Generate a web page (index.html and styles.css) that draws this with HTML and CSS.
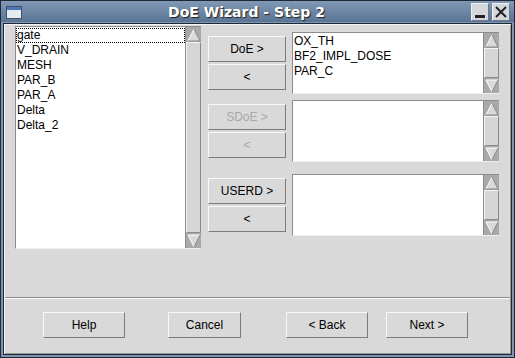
FILE: index.html
```html
<!DOCTYPE html>
<html lang="en">
<head>
    <meta charset="UTF-8">
    <title>DoE Wizard - Step 2</title>
    <link rel="stylesheet" href="styles.css">
</head>
<body>
    <div class="window">
        <!-- Title bar -->
        <div class="titlebar">
            <div class="win-icon"><div class="win-icon-bar"></div></div>
            <div class="title">DoE Wizard - Step 2</div>
            <div class="win-buttons">
                <div class="win-btn">
                    <svg width="16" height="16" viewBox="0 0 16 16"><rect x="3" y="11" width="10" height="3" fill="#222"/></svg>
                </div>
                <div class="win-btn">
                    <svg width="16" height="16" viewBox="0 0 16 16"><path d="M3 3 L13 13 M13 3 L3 13" stroke="#222" stroke-width="2"/></svg>
                </div>
            </div>
        </div>

        <div class="client">
            <div class="main">
                <!-- Parameter list -->
                <div class="listbox tall">
                    <div class="list-items">
                        <div class="item focused">gate</div>
                        <div class="item">V_DRAIN</div>
                        <div class="item">MESH</div>
                        <div class="item">PAR_B</div>
                        <div class="item">PAR_A</div>
                        <div class="item">Delta</div>
                        <div class="item">Delta_2</div>
                    </div>
                    <div class="scrollbar">
                        <div class="arrow"><svg width="14" height="14" viewBox="0 0 14 14"><polygon points="7,1 13,13 1,13" fill="#d9d9d9"/><path d="M7 1 L1 13" stroke="#fff"/><path d="M7 1 L13 13 L1 13" stroke="#8a8a8a" fill="none"/></svg></div>
                        <div class="thumb"></div>
                        <div class="arrow"><svg width="14" height="14" viewBox="0 0 14 14"><polygon points="1,1 13,1 7,13" fill="#d9d9d9"/><path d="M1 1 L13 1 M1 1 L7 13" stroke="#fff"/><path d="M13 1 L7 13" stroke="#8a8a8a"/></svg></div>
                    </div>
                </div>

                <div class="groups">
                    <div class="group g1">
                        <div class="btn-col">
                            <button class="btn">DoE &gt;</button>
                            <button class="btn">&lt;</button>
                        </div>
                        <div class="listbox short">
                            <div class="list-items">
                                <div class="item">OX_TH</div>
                                <div class="item">BF2_IMPL_DOSE</div>
                                <div class="item">PAR_C</div>
                            </div>
                            <div class="scrollbar">
                                <div class="arrow"><svg width="14" height="14" viewBox="0 0 14 14"><polygon points="7,1 13,13 1,13" fill="#d9d9d9"/><path d="M7 1 L1 13" stroke="#fff"/><path d="M7 1 L13 13 L1 13" stroke="#8a8a8a" fill="none"/></svg></div>
                                <div class="thumb"></div>
                                <div class="arrow"><svg width="14" height="14" viewBox="0 0 14 14"><polygon points="1,1 13,1 7,13" fill="#d9d9d9"/><path d="M1 1 L13 1 M1 1 L7 13" stroke="#fff"/><path d="M13 1 L7 13" stroke="#8a8a8a"/></svg></div>
                            </div>
                        </div>
                    </div>

                    <div class="group g2">
                        <div class="btn-col">
                            <button class="btn disabled">SDoE &gt;</button>
                            <button class="btn disabled">&lt;</button>
                        </div>
                        <div class="listbox short">
                            <div class="list-items"></div>
                            <div class="scrollbar">
                                <div class="arrow"><svg width="14" height="14" viewBox="0 0 14 14"><polygon points="7,1 13,13 1,13" fill="#d9d9d9"/><path d="M7 1 L1 13" stroke="#fff"/><path d="M7 1 L13 13 L1 13" stroke="#8a8a8a" fill="none"/></svg></div>
                                <div class="thumb"></div>
                                <div class="arrow"><svg width="14" height="14" viewBox="0 0 14 14"><polygon points="1,1 13,1 7,13" fill="#d9d9d9"/><path d="M1 1 L13 1 M1 1 L7 13" stroke="#fff"/><path d="M13 1 L7 13" stroke="#8a8a8a"/></svg></div>
                            </div>
                        </div>
                    </div>

                    <div class="group g3">
                        <div class="btn-col">
                            <button class="btn">USERD &gt;</button>
                            <button class="btn">&lt;</button>
                        </div>
                        <div class="listbox short">
                            <div class="list-items"></div>
                            <div class="scrollbar">
                                <div class="arrow"><svg width="14" height="14" viewBox="0 0 14 14"><polygon points="7,1 13,13 1,13" fill="#d9d9d9"/><path d="M7 1 L1 13" stroke="#fff"/><path d="M7 1 L13 13 L1 13" stroke="#8a8a8a" fill="none"/></svg></div>
                                <div class="thumb"></div>
                                <div class="arrow"><svg width="14" height="14" viewBox="0 0 14 14"><polygon points="1,1 13,1 7,13" fill="#d9d9d9"/><path d="M1 1 L13 1 M1 1 L7 13" stroke="#fff"/><path d="M13 1 L7 13" stroke="#8a8a8a"/></svg></div>
                            </div>
                        </div>
                    </div>
                </div>
            </div>

            <div class="separator"></div>

            <!-- Wizard buttons -->
            <div class="footer">
                <button class="btn wide help">Help</button>
                <button class="btn cancel">Cancel</button>
                <button class="btn wide back">&lt; Back</button>
                <button class="btn wide next">Next &gt;</button>
            </div>
        </div>
    </div>
</body>
</html>
```

FILE: styles.css
```css
body {
    margin: 0;
    font-family: "Liberation Sans", Arial, sans-serif;
    font-size: 12px;
}
.window {
    width: 515px;
    height: 358px;
    box-sizing: border-box;
    background: #7f95b0;
    border: 1px solid #1e2938;
    display: flex;
    flex-direction: column;
}

/* Title bar */
.titlebar {
    height: 21px;
    flex-shrink: 0;
    display: flex;
    align-items: center;
    background: linear-gradient(#8199b6, #5a7494);
}
.win-icon {
    width: 14px;
    height: 11px;
    margin-left: 5px;
    margin-top: 1px;
    background: #e6ebf0;
    border: 1px solid #3c516c;
}
.win-icon-bar {
    height: 3px;
    background: #4d78b8;
}
.title {
    flex: 1;
    text-align: center;
    color: #fff;
    font-family: "DejaVu Sans", sans-serif;
    font-weight: bold;
    font-size: 14px;
    text-shadow: 1px 1px 1px #222;
}
.win-buttons {
    display: flex;
    gap: 3px;
    margin-right: 4px;
    margin-top: 1px;
}
.win-btn {
    width: 16px;
    height: 16px;
    background: #d4d8dc;
    border: 1px solid #f0f0f0;
    border-right-color: #6a7a8c;
    border-bottom-color: #6a7a8c;
}

/* Client area */
.client {
    flex: 1;
    min-height: 0;
    margin: 1px 2px 2px;
    border: 1px solid #1e2938;
    background: #d9d9d9;
    display: flex;
    flex-direction: column;
    box-shadow: inset 1px 1px 0 #f4f4f4, inset -1px -1px 0 #9a9a9a;
}
.main {
    display: flex;
    padding: 2px 0 0 11px;
    height: 223px;
    flex-shrink: 0;
}

/* Listboxes */
.listbox {
    display: flex;
    background: #fff;
    border-top: 1px solid #8c8c8c;
    border-left: 1px solid #8c8c8c;
    border-bottom: 1px solid #efefef;
    box-sizing: border-box;
}
.listbox.tall {
    width: 186px;
    height: 223px;
}
.listbox.short {
    width: 207px;
    height: 62px;
}
.list-items {
    flex: 1;
    padding-top: 1px;
}
.item {
    height: 15px;
    line-height: 15px;
    padding-left: 1px;
    color: #000;
}
.item.focused {
    outline: 1px dotted #000;
    outline-offset: -1px;
}
.scrollbar {
    width: 15px;
    background: #c8c8c8;
    display: flex;
    flex-direction: column;
    border-left: 1px solid #8c8c8c;
}
.arrow {
    height: 15px;
    background: #a9a9a9;
    display: flex;
    justify-content: center;
    align-items: center;
}
.thumb {
    flex: 1;
    background: #d6d6d6;
    border: 1px solid #f4f4f4;
    border-right-color: #8a8a8a;
    border-bottom-color: #8a8a8a;
}

/* Middle groups */
.groups {
    margin-left: 7px;
}
.group {
    display: flex;
    gap: 6px;
    align-items: center;
}
.g1 { margin-top: 6px; }
.g2 { margin-top: 6px; }
.g3 { margin-top: 12px; }
.btn-col {
    display: flex;
    flex-direction: column;
    gap: 2px;
}

/* Buttons */
.btn {
    font-family: "Liberation Sans", Arial, sans-serif;
    font-size: 12px;
    color: #000;
    width: 78px;
    height: 26px;
    padding: 0;
    background: #d9d9d9;
    border: 1px solid #f8f8f8;
    border-right-color: #7c7c7c;
    border-bottom-color: #7c7c7c;
    cursor: pointer;
}
.btn.disabled {
    color: #a8a8a8;
}

.separator {
    margin: 48px 1px 0;
    border-top: 1px solid #8c8c8c;
    border-bottom: 1px solid #fbfbfb;
}

/* Footer */
.footer {
    display: flex;
    padding: 13px 0 0 39px;
}
.btn.wide { width: 82px; }
.btn.cancel { width: 73px; margin-left: 43px; }
.btn.back { margin-left: 45px; }
.btn.next { margin-left: 18px; }
```
